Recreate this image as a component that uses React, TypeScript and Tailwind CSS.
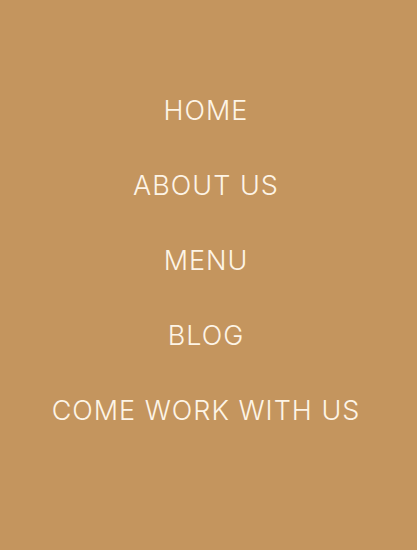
import React from 'react';

const links = ['HOME', 'ABOUT US', 'MENU', 'BLOG', 'COME WORK WITH US'];

export default function App() {
  return (
    <nav className="min-h-[550px] w-full bg-[#c4955e] pt-[97px] pr-[5px]">
      <ul className="flex flex-col items-center gap-[47px]">
        {links.map((link) => (
          <li key={link}>
            <a
              href="#"
              className="block text-[27px] leading-[28px] font-light tracking-[1px] text-[#fdf4e6]"
              style={{ fontFamily: 'Inter, sans-serif' }}
            >
              {link}
            </a>
          </li>
        ))}
      </ul>
    </nav>
  );
}
